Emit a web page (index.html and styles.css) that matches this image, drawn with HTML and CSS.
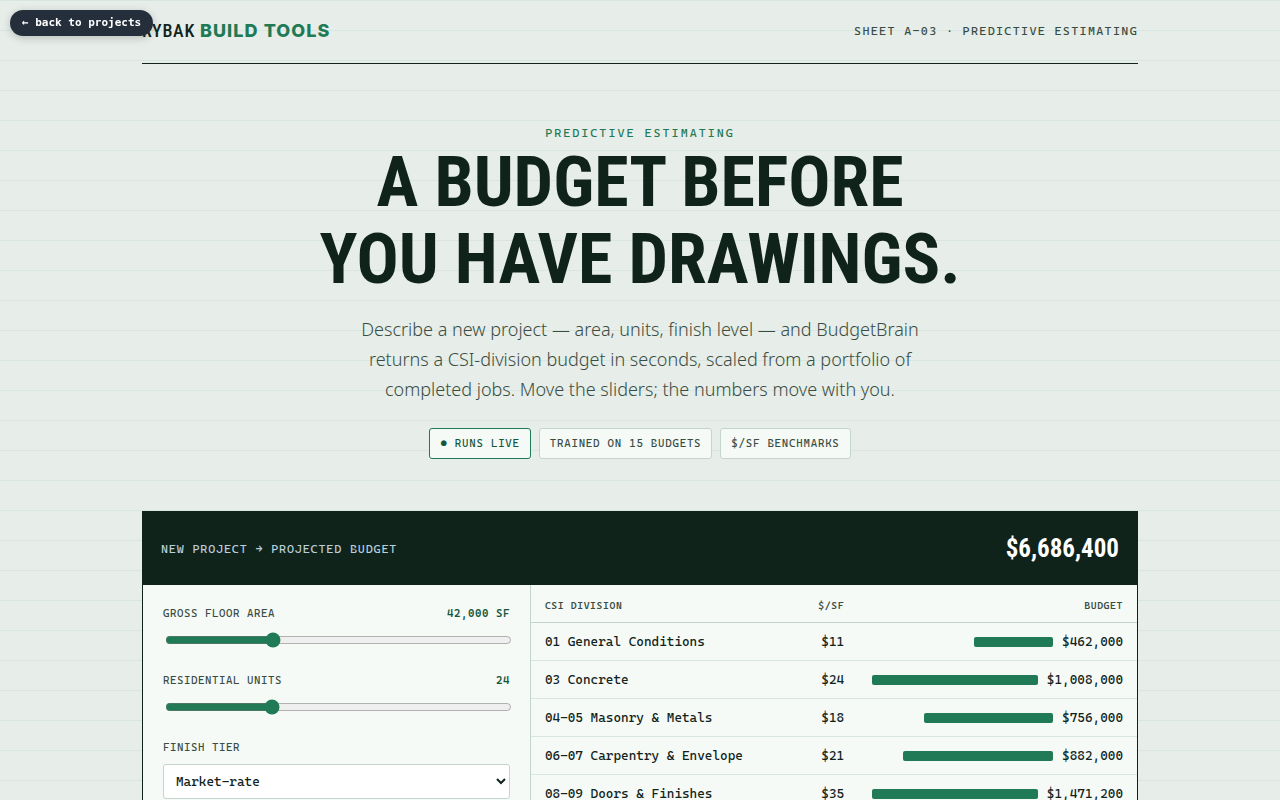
FILE: index.html
```
<!DOCTYPE html>
<html lang="en">
<head>
  <meta charset="utf-8">
  <meta name="viewport" content="width=device-width, initial-scale=1">
  <title>BudgetBrain - Rybak Build Tools</title>
  <link rel="stylesheet" href="styles.css">
</head>
<body>
  <a class="back" href="index.html">← back to projects</a>

  <div class="wrap">
    <header class="top">
      <div class="brand">RYBAK <b>BUILD TOOLS</b></div>
      <div class="sheet">SHEET A-03 · PREDICTIVE ESTIMATING</div>
    </header>

    <section class="hero">
      <div class="eyebrow">PREDICTIVE ESTIMATING</div>
      <h1>A BUDGET BEFORE<br>YOU HAVE DRAWINGS.</h1>
      <p class="lede">Describe a new project — area, units, finish level — and BudgetBrain returns a CSI-division budget in seconds, scaled from a portfolio of completed jobs. Move the sliders; the numbers move with you.</p>
      <div class="chips">
        <span class="chip live">● RUNS LIVE</span>
        <span class="chip">TRAINED ON 15 BUDGETS</span>
        <span class="chip">$/SF BENCHMARKS</span>
      </div>
    </section>

    <section class="panel">
      <div class="panel-head">
        <span class="panel-title">NEW PROJECT → PROJECTED BUDGET</span>
        <span class="total">$6,686,400</span>
      </div>
      <div class="panel-body">
        <form class="controls">
          <div class="field">
            <div class="row"><label for="area">GROSS FLOOR AREA</label><output for="area">42,000 SF</output></div>
            <input type="range" id="area" min="8000" max="120000" step="1000" value="42000">
          </div>
          <div class="field">
            <div class="row"><label for="units">RESIDENTIAL UNITS</label><output for="units">24</output></div>
            <input type="range" id="units" min="0" max="80" value="24">
          </div>
          <div class="field">
            <div class="row"><label for="tier">FINISH TIER</label></div>
            <select id="tier">
              <option>Economy</option>
              <option selected>Market-rate</option>
              <option>Luxury</option>
            </select>
          </div>
        </form>
        <table class="budget">
          <thead>
            <tr><th>CSI DIVISION</th><th class="num">$/SF</th><th class="num amount">BUDGET</th></tr>
          </thead>
          <tbody>
            <tr><td>01 General Conditions</td><td class="num">$11</td><td><div class="cost"><i class="bar" style="width:31.4%"></i>$462,000</div></td></tr>
            <tr><td>03 Concrete</td><td class="num">$24</td><td><div class="cost"><i class="bar" style="width:68.5%"></i>$1,008,000</div></td></tr>
            <tr><td>04-05 Masonry &amp; Metals</td><td class="num">$18</td><td><div class="cost"><i class="bar" style="width:51.4%"></i>$756,000</div></td></tr>
            <tr><td>06-07 Carpentry &amp; Envelope</td><td class="num">$21</td><td><div class="cost"><i class="bar" style="width:60%"></i>$882,000</div></td></tr>
            <tr><td>08-09 Doors &amp; Finishes</td><td class="num">$35</td><td><div class="cost"><i class="bar" style="width:100%"></i>$1,471,200</div></td></tr>
          </tbody>
        </table>
      </div>
    </section>
  </div>
</body>
</html>
```
FILE: styles.css
```
:root {
  --ink: #10231b;
  --soft: #3a4d44;
  --green: #1f7a55;
  --deep: #14573c;
  --paper: #f5faf7;
  --line: #c3d5cc;
  --hair: #d9e5df;
  --mono: "Cascadia Mono", "DejaVu Sans Mono", monospace;
  --narrow: "Roboto Condensed", Roboto, sans-serif;
  --sans: "Noto Sans", "Open Sans", sans-serif;
}

* {
  box-sizing: border-box;
}

body {
  margin: 0;
  color: var(--ink);
  font-family: var(--sans);
  background: #e7ede8 repeating-linear-gradient(#d9e5df 0 1px, transparent 1px 30px);
}

.back {
  position: fixed;
  top: 10px;
  left: 10px;
  padding: 5px 12px;
  border-radius: 13px;
  background: #242f3b;
  color: #fff;
  font: bold 11px/16px "DejaVu Sans Mono", monospace;
  text-decoration: none;
  box-shadow: 0 2px 8px rgba(0, 0, 0, .2);
}

.wrap {
  max-width: 1060px;
  margin: 0 auto;
  padding: 0 32px 64px;
}

.top {
  display: flex;
  justify-content: space-between;
  align-items: center;
  height: 64px;
  padding-bottom: 2px;
  border-bottom: 1px solid var(--ink);
}

.brand {
  font: 500 18px/24px var(--narrow);
  letter-spacing: .04em;
}

.brand b {
  color: var(--green);
  font-family: Inter, sans-serif;
  font-weight: 800;
  letter-spacing: .06em;
}

.sheet {
  color: var(--soft);
  font: 12px/18px var(--mono);
  letter-spacing: .11em;
}

.hero {
  padding: 60px 0 52px;
  text-align: center;
}

.eyebrow {
  margin-bottom: 2px;
  color: var(--green);
  font: 500 12px/18px var(--mono);
  letter-spacing: 2px;
}

h1 {
  margin: 0;
  font: bold 70px/77px var(--narrow);
}

.lede {
  max-width: 600px;
  margin: 16px auto 24px;
  color: var(--soft);
  font-size: 18px;
  font-weight: 350;
  line-height: 30px;
}

.chips {
  display: flex;
  flex-wrap: wrap;
  justify-content: center;
  gap: 8px;
}

.chip {
  padding: 6px 10px;
  border: 1px solid var(--line);
  border-radius: 3px;
  background: var(--paper);
  color: var(--soft);
  font: 11px/17px var(--mono);
  letter-spacing: .07em;
}

.chip.live {
  border-color: var(--green);
  color: var(--deep);
}

.panel {
  border: 1px solid var(--ink);
  background: var(--paper);
}

.panel-head {
  display: flex;
  justify-content: space-between;
  align-items: center;
  height: 73px;
  padding: 0 18px;
  background: var(--ink);
}

.panel-title {
  color: #b9cfdb;
  font: 500 12px/18px var(--mono);
  letter-spacing: .07em;
}

.total {
  color: #fff;
  font: bold 25px/40px var(--narrow);
}

.panel-body {
  display: grid;
  grid-template-columns: minmax(0, 16fr) minmax(0, 25fr);
  align-items: start;
}

.controls {
  align-self: stretch;
  padding: 20px;
  border-right: 1px solid var(--line);
}

.field {
  display: flex;
  flex-direction: column;
  gap: 7px;
  margin-bottom: 22px;
}

.row {
  display: flex;
  justify-content: space-between;
  color: var(--soft);
  font: 11px/18px var(--mono);
  letter-spacing: .05em;
}

.row output {
  color: var(--deep);
  font-weight: 600;
}

input[type="range"] {
  width: 100%;
  accent-color: var(--green);
}

select {
  width: 100%;
  height: 35px;
  padding: 0 8px;
  border: 1px solid var(--line);
  border-radius: 3px;
  background: #fff;
  color: var(--ink);
  font: 13px var(--mono);
}

.budget {
  width: 100%;
  border-collapse: collapse;
  font: 13px/20px var(--mono);
}

.budget th {
  padding: 12px 14px 7px;
  border-bottom: 1px solid var(--line);
  color: var(--soft);
  font-size: 10px;
  font-weight: 600;
  line-height: 18px;
  letter-spacing: .06em;
  text-align: left;
}

.budget td {
  padding: 9px 14px 8px;
  border-bottom: 1px solid var(--hair);
}

.budget .num {
  text-align: right;
}

.budget .amount {
  width: 46%;
}

.cost {
  display: flex;
  justify-content: flex-end;
  align-items: center;
  gap: 9px;
}

.bar {
  height: 10px;
  border-radius: 2px;
  background: var(--green);
}
```
